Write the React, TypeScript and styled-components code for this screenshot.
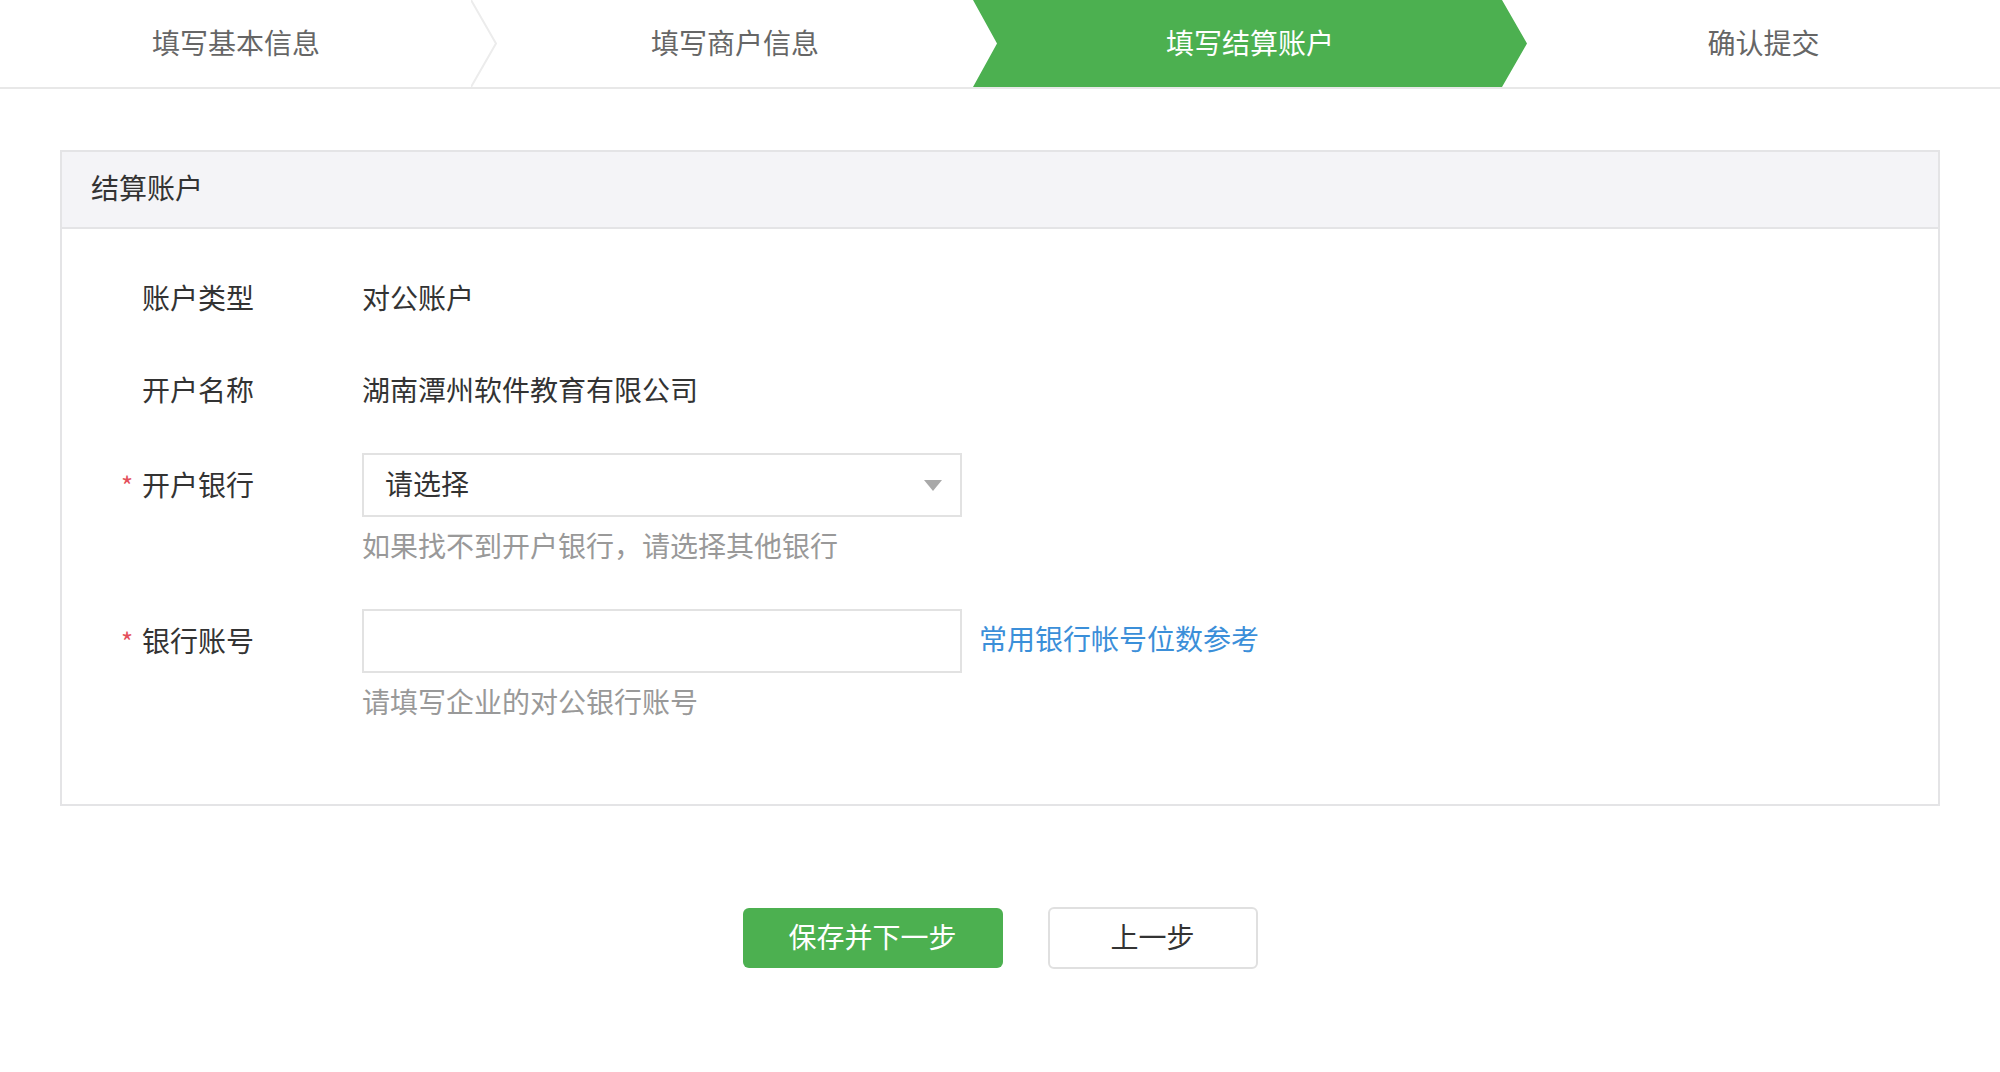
import React from 'react';
import styled, { createGlobalStyle, css } from 'styled-components';

const GlobalStyle = createGlobalStyle`
  html, body {
    margin: 0;
    padding: 0;
    background: #ffffff;
  }
  body {
    font-family: "PingFang SC", "Noto Sans CJK SC", "Noto Sans", sans-serif;
    color: #333333;
  }
`;

const Page = styled.div`
  width: 2000px;
  min-height: 1072px;
  background: #ffffff;
`;

const StepBar = styled.div`
  display: flex;
  height: 87px;
  border-bottom: 2px solid #e8e8e8;
  overflow: hidden;
`;

const Step = styled.div<{ $width: number; $offset: number; $active?: boolean }>`
  position: relative;
  flex: 0 0 ${(p) => p.$width}px;
  box-sizing: border-box;
  padding-left: ${(p) => p.$offset}px;
  padding-bottom: 3px;
  display: flex;
  align-items: center;
  justify-content: center;
  font-size: 28px;
  color: ${(p) => (p.$active ? '#ffffff' : '#666666')};
  ${(p) =>
    p.$active &&
    css`
      z-index: 1;
      &::before {
        content: '';
        position: absolute;
        top: 0;
        left: 0;
        width: calc(100% + 25px);
        height: 100%;
        background: #4cb050;
        clip-path: polygon(
          0 0,
          calc(100% - 25px) 0,
          100% 50%,
          calc(100% - 25px) 100%,
          0 100%,
          24px 50%
        );
        z-index: -1;
      }
    `}
`;

const StepLabel = styled.span`
  position: relative;
`;

const Divider = styled.svg`
  position: absolute;
  top: 0;
  right: -25px;
  width: 26px;
  height: 87px;
`;

const Panel = styled.section`
  margin: 61px 60px 0;
  border: 2px solid #e4e4e6;
`;

const PanelHeader = styled.div`
  box-sizing: border-box;
  height: 77px;
  display: flex;
  align-items: center;
  padding: 0 0 6px 29px;
  background: #f4f4f7;
  border-bottom: 2px solid #e4e4e6;
  font-size: 28px;
  color: #333333;
`;

const PanelBody = styled.div`
  display: flex;
  flex-direction: column;
  padding: 37px 0 70px;
`;

const FormRow = styled.div<{ $gap?: number; $hasHint?: boolean }>`
  display: grid;
  grid-template-columns: 300px 1fr;
  margin-top: ${(p) => p.$gap ?? 0}px;
  padding-bottom: ${(p) => (p.$hasHint ? 12 : 0)}px;
`;

const Label = styled.div`
  box-sizing: border-box;
  padding: 0 0 2px 80px;
  height: 64px;
  line-height: 62px;
  font-size: 28px;
  color: #333333;
`;

const Required = styled.span`
  display: inline-block;
  width: 21px;
  margin-left: -21px;
  color: #e4505a;
  font-size: 26px;
`;

const Field = styled.div`
  display: flex;
  flex-direction: column;
`;

const FieldLine = styled.div`
  display: flex;
  align-items: center;
  gap: 17px;
  height: 64px;
`;

const Value = styled.span`
  font-size: 28px;
  line-height: 62px;
  padding-bottom: 2px;
  color: #333333;
`;

const SelectBox = styled.div`
  box-sizing: border-box;
  width: 600px;
  height: 64px;
  border: 2px solid #e2e2e2;
  display: flex;
  align-items: center;
  justify-content: space-between;
  padding: 0 18px 0 21px;
  font-size: 28px;
  color: #333333;
  background: #ffffff;
`;

const SelectText = styled.span`
  padding-bottom: 4px;
`;

const Caret = styled.span`
  width: 0;
  height: 0;
  border-left: 9px solid transparent;
  border-right: 9px solid transparent;
  border-top: 11px solid #a9a9a9;
`;

const TextInput = styled.input`
  box-sizing: border-box;
  width: 600px;
  height: 64px;
  border: 2px solid #e2e2e2;
  padding: 0 21px;
  font-size: 28px;
  font-family: inherit;
  outline: none;
  background: #ffffff;
`;

const Hint = styled.div`
  margin-top: 9px;
  padding-bottom: 1px;
  height: 39px;
  font-size: 28px;
  line-height: 39px;
  color: #999999;
`;

const HelpLink = styled.a`
  font-size: 28px;
  padding-bottom: 6px;
  color: #3b8fd9;
  text-decoration: none;
  cursor: pointer;
`;

const Actions = styled.div`
  display: flex;
  justify-content: center;
  align-items: center;
  gap: 45px;
  margin-top: 101px;
`;

const Button = styled.button<{ $primary?: boolean }>`
  box-sizing: border-box;
  font-family: inherit;
  font-size: 28px;
  border-radius: 6px;
  padding: 0 0 4px;
  cursor: pointer;
  ${(p) =>
    p.$primary
      ? css`
          width: 260px;
          height: 60px;
          border: none;
          background: #4cb050;
          color: #ffffff;
        `
      : css`
          width: 210px;
          height: 62px;
          border: 2px solid #e0e0e0;
          background: #ffffff;
          color: #333333;
        `}
`;

const steps = [
  { label: '填写基本信息', width: 472, offset: 0 },
  { label: '填写商户信息', width: 501, offset: 25 },
  { label: '填写结算账户', width: 529, offset: 25, active: true },
  { label: '确认提交', width: 498, offset: 25 },
];

export default function App() {
  return (
    <Page>
      <GlobalStyle />
      <StepBar>
        {steps.map((s, i) => (
          <Step key={s.label} $width={s.width} $offset={s.offset} $active={s.active}>
            <StepLabel>{s.label}</StepLabel>
            {i === 0 && (
              <Divider viewBox="0 0 26 87">
                <polyline points="0,0 25,43.5 0,87" fill="none" stroke="#ececec" strokeWidth="2" />
              </Divider>
            )}
          </Step>
        ))}
      </StepBar>

      <Panel>
        <PanelHeader>结算账户</PanelHeader>
        <PanelBody>
          <FormRow>
            <Label>账户类型</Label>
            <Field>
              <FieldLine>
                <Value>对公账户</Value>
              </FieldLine>
            </Field>
          </FormRow>
          <FormRow $gap={28}>
            <Label>开户名称</Label>
            <Field>
              <FieldLine>
                <Value>湖南潭州软件教育有限公司</Value>
              </FieldLine>
            </Field>
          </FormRow>
          <FormRow $gap={31} $hasHint>
            <Label>
              <Required>*</Required>开户银行
            </Label>
            <Field>
              <FieldLine>
                <SelectBox>
                  <SelectText>请选择</SelectText>
                  <Caret />
                </SelectBox>
              </FieldLine>
              <Hint>如果找不到开户银行，请选择其他银行</Hint>
            </Field>
          </FormRow>
          <FormRow $gap={31} $hasHint>
            <Label>
              <Required>*</Required>银行账号
            </Label>
            <Field>
              <FieldLine>
                <TextInput />
                <HelpLink>常用银行帐号位数参考</HelpLink>
              </FieldLine>
              <Hint>请填写企业的对公银行账号</Hint>
            </Field>
          </FormRow>
        </PanelBody>
      </Panel>

      <Actions>
        <Button $primary>保存并下一步</Button>
        <Button>上一步</Button>
      </Actions>
    </Page>
  );
}
